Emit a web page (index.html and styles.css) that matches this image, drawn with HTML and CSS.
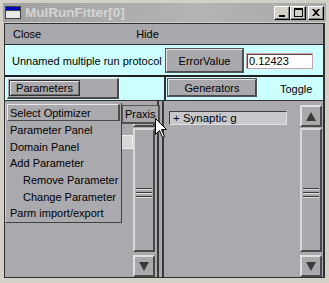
FILE: index.html
```html
<!DOCTYPE html>
<html>
<head>
<meta charset="utf-8">
<link rel="stylesheet" href="styles.css">
</head>
<body>
<div class="win">
  <div class="title">
    <svg class="ticon" width="16" height="13" viewBox="0 0 16 13">
      <rect x="0.5" y="0.5" width="15" height="12" fill="#e8e8e8" stroke="#404040"/>
      <rect x="1" y="1" width="14" height="3" fill="#0000c0"/>
      <line x1="1" y1="4.5" x2="15" y2="4.5" stroke="#404040"/>
    </svg>
    <span class="ttext">MulRunFitter[0]</span>
    <div class="tbtns">
      <span class="tb"><svg width="8" height="8" viewBox="0 0 8 8"><rect x="1" y="6" width="6" height="2" fill="#000"/></svg></span>
      <span class="tb"><svg width="9" height="9" viewBox="0 0 9 9"><rect x="0.5" y="0.5" width="8" height="8" fill="none" stroke="#000"/><rect x="0" y="0" width="9" height="2" fill="#000"/></svg></span>
      <span class="tb tbx"><svg width="8" height="7" viewBox="0 0 8 7"><path d="M0 0h2l2 2 2-2h2L5 3.5 8 7H6L4 5 2 7H0l3-3.5z" fill="#000"/></svg></span>
    </div>
  </div>
  <div class="client">
    <div class="menubar"><span class="mclose">Close</span><span class="mhide">Hide</span></div>
    <div class="row1">
      <div class="proto">Unnamed multiple run protocol</div>
      <div class="btn ev">ErrorValue</div>
      <div class="field">0.12423</div>
    </div>
    <div class="row2">
      <div class="cell2l">
        <div class="mbtn"><div class="mlabel">Parameters</div></div>
      </div>
      <div class="cell2r">
        <div class="btn gen">Generators</div>
        <span class="toggle">Toggle</span>
      </div>
    </div>
    <div class="row3">
      <div class="paneL">
        <div class="list">
          <div class="litemL"></div>
        </div>
        <div class="sbar">
          <div class="sbtn"><span class="up"></span></div>
          <div class="thumb"><span class="grip"></span></div>
          <div class="sbtn"><span class="down"></span></div>
        </div>
      </div>
      <div class="divider"></div>
      <div class="paneR">
        <div class="list">
          <div class="litem">+ Synaptic g</div>
        </div>
        <div class="sbar">
          <div class="sbtn"><span class="up"></span></div>
          <div class="thumb"><span class="grip"></span></div>
          <div class="sbtn"><span class="down"></span></div>
        </div>
      </div>
    </div>
  </div>
  <div class="menu">
    <div class="mi sel">Select Optimizer</div>
    <div class="mi">Parameter Panel</div>
    <div class="mi">Domain Panel</div>
    <div class="mi">Add Parameter</div>
    <div class="mi ind">Remove Parameter</div>
    <div class="mi ind">Change Parameter</div>
    <div class="mi">Parm import/export</div>
  </div>
  <div class="btn praxis">Praxis</div>
  <svg class="cursor" width="13" height="21" viewBox="0 0 13 21">
    <path d="M0.5 0.5 L0.5 16.5 L4.5 12.5 L7.5 19.5 L9.5 18.5 L6.5 11.5 L11.5 11.5 Z" fill="#fff" stroke="#000" stroke-width="1"/>
  </svg>
</div>
</body>
</html>
```
FILE: styles.css
```css
* { box-sizing: border-box; }
body { margin: 0; background: #d4d0c8; font-family: "Liberation Sans", Arial, sans-serif; font-size: 11px; color: #000; }
.win { position: relative; width: 329px; height: 283px; background: #d4d0c8; padding-top: 3px; overflow: hidden; }
.title { height: 19px; margin: 0 3px; display: flex; align-items: center; background: linear-gradient(90deg, #a0a0a0, #b4b4b4 60%, #a8a8a8); }
.ticon { margin-left: 2px; flex: none; }
.ttext { margin-left: 4px; font-weight: bold; font-size: 13.5px; color: #d4d4d4; }
.tbtns { margin-left: auto; margin-right: 2px; display: flex; gap: 0; }
.tb { width: 16px; height: 14px; background: #d4d0c8; display: flex; align-items: center; justify-content: center;
  border-top: 1px solid #fff; border-left: 1px solid #fff; border-right: 1px solid #000; border-bottom: 1px solid #000;
  box-shadow: inset -1px -1px 0 #808080; }
.tbx { margin-left: 2px; }
.client { margin: 1px 0 0 4px; width: 321px; height: 255px; border: 1px solid #303030; border-right-width: 2px; background: #aaa9ad; display: flex; flex-direction: column; }
.menubar { height: 21px; flex: none; background: #a9a8ac; border-bottom: 1px solid #303030; display: flex; align-items: center; }
.mclose { margin-left: 8px; }
.mhide { margin-left: 95px; }
.row1 { height: 32px; flex: none; background: #ccffff; border-bottom: 2px solid #202020; display: flex; align-items: center; }
.proto { width: 160px; padding-left: 7px; padding-top: 2px; white-space: nowrap; }
.btn { background: #a9a8ac; display: flex; align-items: center; justify-content: center;
  border-top: 2px solid #e4e4e4; border-left: 2px solid #e4e4e4; border-right: 2px solid #4a4a4a; border-bottom: 2px solid #4a4a4a; white-space: nowrap; }
.ev { width: 79px; height: 25px; margin-top: 1px; outline: 1px solid #555; outline-offset: -1px; }
.field { width: 67px; height: 16px; margin-left: 2px; margin-top: 1px; background: #fff; border: 1px solid #c8a0a8; box-shadow: inset 1px 1px 0 #604848; padding-left: 2px; line-height: 14px; }
.row2 { height: 24px; flex: none; background: #ccffff; border-bottom: 1px solid #303030; display: flex; }
.cell2l { width: 159px; display: flex; align-items: center; padding-left: 2px; }
.mbtn { width: 112px; height: 21px; background: #a9a8ac; border-top: 1px solid #e8e8e8; border-left: 1px solid #e8e8e8; border-right: 2px solid #4a4a4a; border-bottom: 2px solid #4a4a4a; padding: 1px 0 0 1px; }
.mlabel { width: 71px; height: 16px; border: 1px solid #303030; box-shadow: inset 1px 1px 0 #e8e8e8, inset -1px -1px 0 #707070; display: flex; align-items: center; justify-content: center; }
.cell2r { flex: 1; border-left: 2px solid #303030; display: flex; align-items: center; padding-top: 1px; }
.gen { width: 90px; height: 19px; margin-left: 1px; margin-top: -3px; outline: 1px solid #555; outline-offset: -1px; }
.toggle { margin-left: 23px; }
.row3 { flex: 1; display: flex; }
.paneL { width: 154px; display: flex; border-right: 2px solid #3a3a3a; }
.divider { width: 3px; background: #a9a8ac; }
.paneR { flex: 1; display: flex; border-left: 2px solid #3a3a3a; }
.list { flex: 1; padding: 10px 0 0 5px; }
.paneL .list { padding-top: 34px; }
.litemL { width: 123px; height: 14px; background: #d8d8d8; border: 1px solid #f0f0f0; }
.litem { width: 118px; height: 14px; background: #c8c8cc; border-top: 1px solid #404040; border-left: 1px solid #404040; border-bottom: 1px solid #e0e0e0; border-right: 1px solid #e0e0e0; padding-left: 3px; line-height: 12px; font-size: 11.5px; }
.sbar { width: 22px; flex: none; display: flex; flex-direction: column; padding-top: 4px; margin-right: 1px; }
.paneL .sbar { margin-right: 2px; }
.sbtn { height: 22px; background: #a9a8ac; border-top: 2px solid #e0e0e0; border-left: 2px solid #e0e0e0; border-right: 2px solid #4a4a4a; border-bottom: 2px solid #4a4a4a; display: flex; align-items: center; justify-content: center; flex: none; }
.up { width: 0; height: 0; border-left: 5px solid transparent; border-right: 5px solid transparent; border-bottom: 9px solid #3a3a3a; }
.down { width: 0; height: 0; border-left: 5px solid transparent; border-right: 5px solid transparent; border-top: 9px solid #3a3a3a; }
.thumb { flex: 1; margin: 1px 0 3px; background: #a9a8ac; border-top: 2px solid #d8d8d8; border-left: 2px solid #d8d8d8; border-right: 2px solid #4a4a4a; border-bottom: 2px solid #4a4a4a; display: flex; align-items: center; justify-content: center; }
.grip { width: 16px; height: 10px; background: repeating-linear-gradient(#3a3a3a 0 1px, #e0e0e0 1px 2px, transparent 2px 4px); margin-top: 6px; }
.menu { position: absolute; left: 5px; top: 103px; width: 117px; height: 120px; background: #aaa9ad; border-right: 1px solid #404040; border-bottom: 1px solid #404040; border-left: 1px solid #d0d0d0; padding: 1px 1px 0 1px; }
.mi { height: 16.7px; display: flex; align-items: center; padding-left: 3px; white-space: nowrap; }
.mi.sel { height: 17px; border-top: 1px solid #e8e8e8; border-left: 1px solid #e8e8e8; border-right: 2px solid #4a4a4a; border-bottom: 1px solid #4a4a4a; padding-left: 2px; margin-bottom: 0.5px; }
.mi.ind { padding-left: 16px; }
.praxis { position: absolute; left: 122px; top: 105px; width: 38px; height: 19px; outline: 1px solid #555; outline-offset: -1px; border-width: 1px 2px 2px 1px; font-size: 11px; overflow: visible; justify-content: flex-start; padding-left: 2px; }
.cursor { position: absolute; left: 155px; top: 118px; }
```
